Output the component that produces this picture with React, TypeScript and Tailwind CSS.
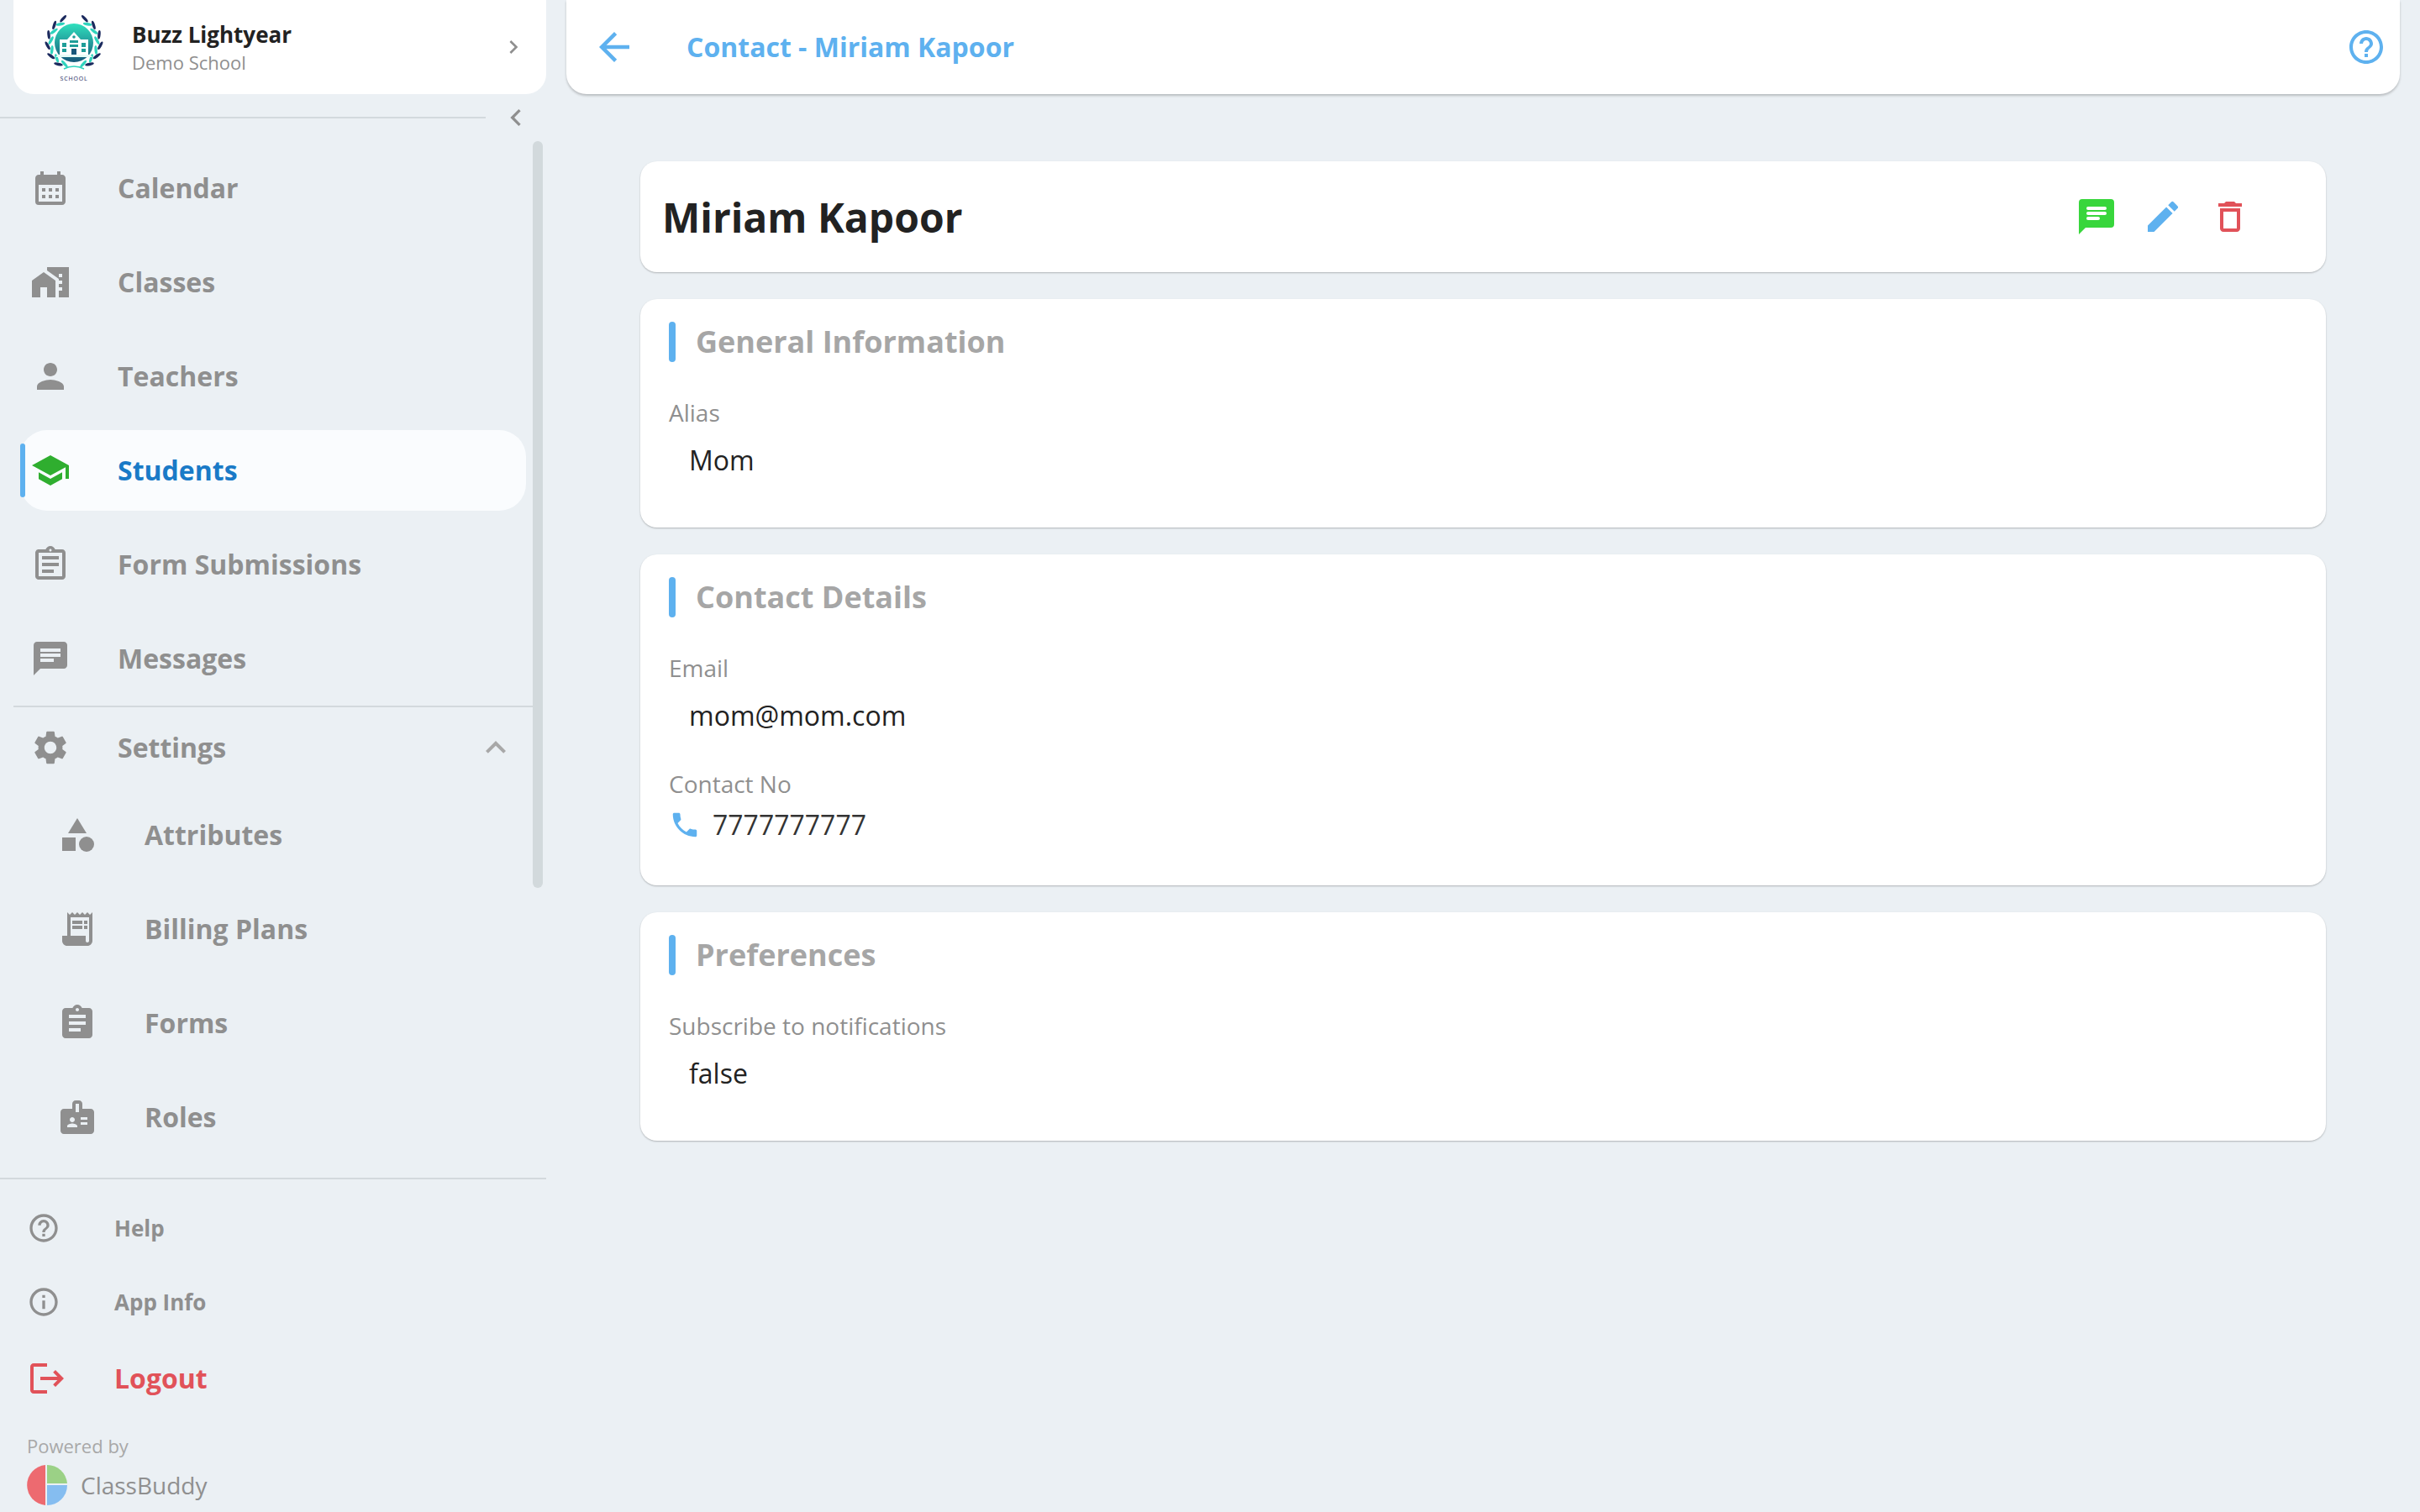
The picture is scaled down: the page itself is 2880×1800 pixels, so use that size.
import type { ReactNode } from "react";
import {
  MdArrowBack,
  MdBadge,
  MdCalendarMonth,
  MdCategory,
  MdChat,
  MdChevronLeft,
  MdChevronRight,
  MdEdit,
  MdExpandLess,
  MdHelpOutline,
  MdInfoOutline,
  MdLogout,
  MdMapsHomeWork,
  MdOutlineAssignment,
  MdOutlineDelete,
  MdAssignment,
  MdPerson,
  MdPhone,
  MdReceiptLong,
  MdSchool,
  MdSettings,
} from "react-icons/md";

const mainNav = [
  { label: "Calendar", icon: MdCalendarMonth },
  { label: "Classes", icon: MdMapsHomeWork },
  { label: "Teachers", icon: MdPerson },
  { label: "Students", icon: MdSchool, active: true },
  { label: "Form Submissions", icon: MdOutlineAssignment },
  { label: "Messages", icon: MdChat },
];

const settingsNav = [
  { label: "Attributes", icon: MdCategory },
  { label: "Billing Plans", icon: MdReceiptLong },
  { label: "Forms", icon: MdAssignment },
  { label: "Roles", icon: MdBadge },
];

function Wreath() {
  const leaves = Array.from({ length: 12 }, (_, i) => {
    const a = 24 + i * 12;
    const r = i % 2 === 0 ? 31.5 : 27.5;
    const rad = (a * Math.PI) / 180;
    return {
      x: r * Math.sin(rad),
      y: -r * Math.cos(rad),
      rot: a + 90 + (i % 2 === 0 ? 24 : -24),
      color: i % 2 === 0 ? "#1b2a5e" : "#2fd3bd",
    };
  });
  return (
    <>
      {leaves.map((l, i) => (
        <ellipse
          key={i}
          cx={l.x}
          cy={l.y}
          rx="1.7"
          ry="5.4"
          fill={l.color}
          transform={`rotate(${l.rot} ${l.x} ${l.y})`}
        />
      ))}
    </>
  );
}

function SchoolLogo() {
  return (
    <svg viewBox="0 0 80 86" className="w-[80px] h-[86px]">
      <defs>
        <linearGradient id="crest" x1="0" y1="0" x2="0" y2="1">
          <stop offset="0" stopColor="#2fe0bd" />
          <stop offset="1" stopColor="#17577a" />
        </linearGradient>
      </defs>
      <g transform="translate(40 38)">
        <Wreath />
        <g transform="scale(-1 1)">
          <Wreath />
        </g>
        <circle r="23" fill="url(#crest)" />
        <path d="M-17 -4h9l8 -9 8 9h9v18h-34z" fill="#fff" />
        <path d="M-19 14h38l3 3h-44z" fill="#e7fbf7" />
        <path d="M-3 7h6v7h-6z" fill="#17577a" />
        <g fill="#1f9d98">
          <rect x="-14" y="0" width="5" height="5" />
          <rect x="9" y="0" width="5" height="5" />
          <rect x="-14" y="7" width="5" height="4" />
          <rect x="9" y="7" width="5" height="4" />
          <rect x="-5" y="-3" width="10" height="3" />
          <rect x="-5" y="2" width="10" height="3" />
          <circle cy="-7" r="1.8" />
        </g>
        <path d="M-12 31q12 -6 24 0" stroke="#2fd3bd" strokeWidth="1.6" fill="none" />
      </g>
      <text x="40" y="83" textAnchor="middle" fontSize="7" letterSpacing="0.8" fill="#1b2a5e">
        SCHOOL
      </text>
    </svg>
  );
}

function ClassBuddyLogo() {
  return (
    <svg viewBox="0 0 48 48" className="w-[48px] h-[48px]">
      <path d="M22 0.1A24 24 0 0 0 22 47.9z" fill="#ed6a70" />
      <path d="M24 0A24 24 0 0 1 48 22H24z" fill="#9bd186" />
      <path d="M24 24H48A24 24 0 0 1 24 48z" fill="#85bdf0" />
    </svg>
  );
}

function ChatGreen() {
  return (
    <svg viewBox="0 0 42 42" className="w-[42px] h-[42px]">
      <path d="M4 0H38a4 4 0 0 1 4 4V30a4 4 0 0 1-4 4H8L0 42V4a4 4 0 0 1 4-4z" fill="#38d63c" />
      <rect x="9" y="9" width="24" height="4" rx="2" fill="#fff" />
      <rect x="9" y="15" width="24" height="4" rx="2" fill="#fff" />
      <rect x="9" y="21" width="16" height="4" rx="2" fill="#fff" />
    </svg>
  );
}

function Section({ title, className, children }: { title: string; className: string; children: ReactNode }) {
  return (
    <section className={`bg-white rounded-[20px] shadow-[0_1px_2px_rgba(0,0,0,0.25)] pl-[34px] pt-[27px] ${className}`}>
      <div className="flex items-center h-[48px]">
        <div className="w-2 h-[48px] rounded-full bg-[#5eb1ef]" />
        <h2 className="ml-6 text-[36px] leading-[48px] font-bold text-[#a6a6a6]">{title}</h2>
      </div>
      {children}
    </section>
  );
}

function Label({ className, children }: { className: string; children: ReactNode }) {
  return <div className={`text-[28px] leading-[40px] text-[#8f8f8f] ${className}`}>{children}</div>;
}

function Value({ children }: { children: ReactNode }) {
  return <div className="mt-[13px] pl-[24px] text-[32px] leading-[48px] text-[#222]">{children}</div>;
}

export default function App() {
  return (
    <div className="flex w-[2880px] h-[1800px] overflow-hidden bg-[#ebf0f4] font-['Open_Sans',sans-serif]">
      {/* Sidebar */}
      <aside className="flex flex-col w-[650px] shrink-0">
        <div className="ml-4 flex items-center h-[112px] rounded-b-[24px] bg-white pl-8 pr-[23px]">
          <SchoolLogo />
          <div className="ml-[29px] flex-1">
            <div className="text-[26px] leading-[36px] font-bold text-[#222]">Buzz Lightyear</div>
            <div className="text-[22px] leading-[30px] text-[#8f8f8f]">Demo School</div>
          </div>
          <MdChevronRight size={32} className="text-[#8f8f8f]" />
        </div>

        <div className="flex items-center h-[56px]">
          <div className="w-[578px] h-[2px] bg-[#d3d9dd]" />
          <MdChevronLeft size={40} className="ml-4 text-[#8f8f8f]" />
        </div>

        <div className="flex h-[1234px]">
          <nav className="w-[634px] shrink-0">
            {mainNav.map(({ label, icon: Icon, active }) => (
              <div key={label} className="h-[112px] flex items-center">
                <div
                  className={
                    active
                      ? "relative ml-6 flex items-center w-[602px] h-[96px] rounded-[32px] bg-[#fafcfe] pl-[12px]"
                      : "ml-6 flex items-center w-[602px] h-[96px] pl-[12px]"
                  }
                >
                  {active && <div className="absolute left-0 top-4 w-[6px] h-[64px] rounded-full bg-[#5eb1ef]" />}
                  <Icon size={48} className={active ? "text-[#2fae2f]" : "text-[#8f8f8f]"} />
                  <span
                    className={
                      active
                        ? "ml-[56px] text-[32px] font-bold text-[#1a7ac7]"
                        : "ml-[56px] text-[32px] font-bold text-[#8f8f8f]"
                    }
                  >
                    {label}
                  </span>
                </div>
              </div>
            ))}

            <div className="h-[2px] ml-4 bg-[#d3d9dd]" />

            <div className="h-[96px] ml-6 flex items-center pl-[12px] pr-[20px]">
              <MdSettings size={48} className="text-[#8f8f8f]" />
              <span className="ml-[56px] flex-1 text-[32px] font-bold text-[#8f8f8f]">Settings</span>
              <MdExpandLess size={48} className="text-[#a8a8a8]" />
            </div>

            {settingsNav.map(({ label, icon: Icon }) => (
              <div key={label} className="h-[112px] flex items-center pl-[68px]">
                <Icon size={48} className="text-[#8f8f8f]" />
                <span className="ml-[56px] text-[32px] font-bold text-[#8f8f8f]">{label}</span>
              </div>
            ))}
          </nav>
          <div className="w-3 h-[889px] rounded-full bg-[#d2d9dc]" />
        </div>

        <div className="h-[2px] bg-[#d3d9dd]" />

        <div className="flex flex-col pl-8 pt-[14px]">
          {[
            { label: "Help", icon: MdHelpOutline },
            { label: "App Info", icon: MdInfoOutline },
          ].map(({ label, icon: Icon }) => (
            <div key={label} className="h-[88px] flex items-center">
              <Icon size={40} className="text-[#8f8f8f]" />
              <span className="ml-[64px] text-[26px] font-bold text-[#8f8f8f]">{label}</span>
            </div>
          ))}
          <div className="h-[94px] flex items-center">
            <MdLogout size={48} className="text-[#e15259]" />
            <span className="ml-[56px] text-[32px] font-bold text-[#e15259]">Logout</span>
          </div>
          <div className="mt-[18px] text-[22px] leading-[30px] text-[#a8a8a8]">Powered by</div>
          <div className="flex items-center mt-[8px]">
            <ClassBuddyLogo />
            <span className="ml-4 text-[28px] leading-[48px] text-[#8f8f8f]">ClassBuddy</span>
          </div>
        </div>
      </aside>

      {/* Main */}
      <main className="flex-1 flex flex-col">
        <header className="mx-6 h-[112px] flex items-center justify-between rounded-b-[24px] bg-white shadow-[0_2px_3px_rgba(0,0,0,0.22)] pl-[30px] pr-[16px]">
          <div className="flex items-center">
            <MdArrowBack size={54} className="text-[#5eb1ef]" />
            <h1 className="ml-[59px] text-[32px] font-bold text-[#5eb1ef]">Contact - Miriam Kapoor</h1>
          </div>
          <MdHelpOutline size={48} className="text-[#5eb1ef]" />
        </header>

        <div className="flex flex-col gap-8 px-[112px] pt-[80px]">
          <div className="h-[132px] flex items-center justify-between rounded-[20px] bg-white shadow-[0_1px_2px_rgba(0,0,0,0.25)] pl-[26px] pr-[90px]">
            <h1 className="pt-[2px] text-[48px] font-bold text-[#222]">Miriam Kapoor</h1>
            <div className="flex items-center">
              <ChatGreen />
              <MdEdit size={48} className="ml-[34px] text-[#5eb1ef]" />
              <MdOutlineDelete size={48} className="ml-[32px] text-[#e15259]" />
            </div>
          </div>

          <Section title="General Information" className="pb-[56px]">
            <Label className="mt-[40px]">Alias</Label>
            <Value>Mom</Value>
          </Section>

          <Section title="Contact Details" className="pb-[48px]">
            <Label className="mt-[40px]">Email</Label>
            <Value>mom@mom.com</Value>
            <Label className="mt-[37px]">Contact No</Label>
            <div className="mt-[5px] flex items-center h-[48px]">
              <MdPhone size={38} className="text-[#5eb1ef]" />
              <span className="ml-[14px] text-[32px] text-[#333]">7777777777</span>
            </div>
          </Section>

          <Section title="Preferences" className="pb-[56px]">
            <Label className="mt-[40px]">Subscribe to notifications</Label>
            <Value>false</Value>
          </Section>
        </div>
      </main>
    </div>
  );
}
